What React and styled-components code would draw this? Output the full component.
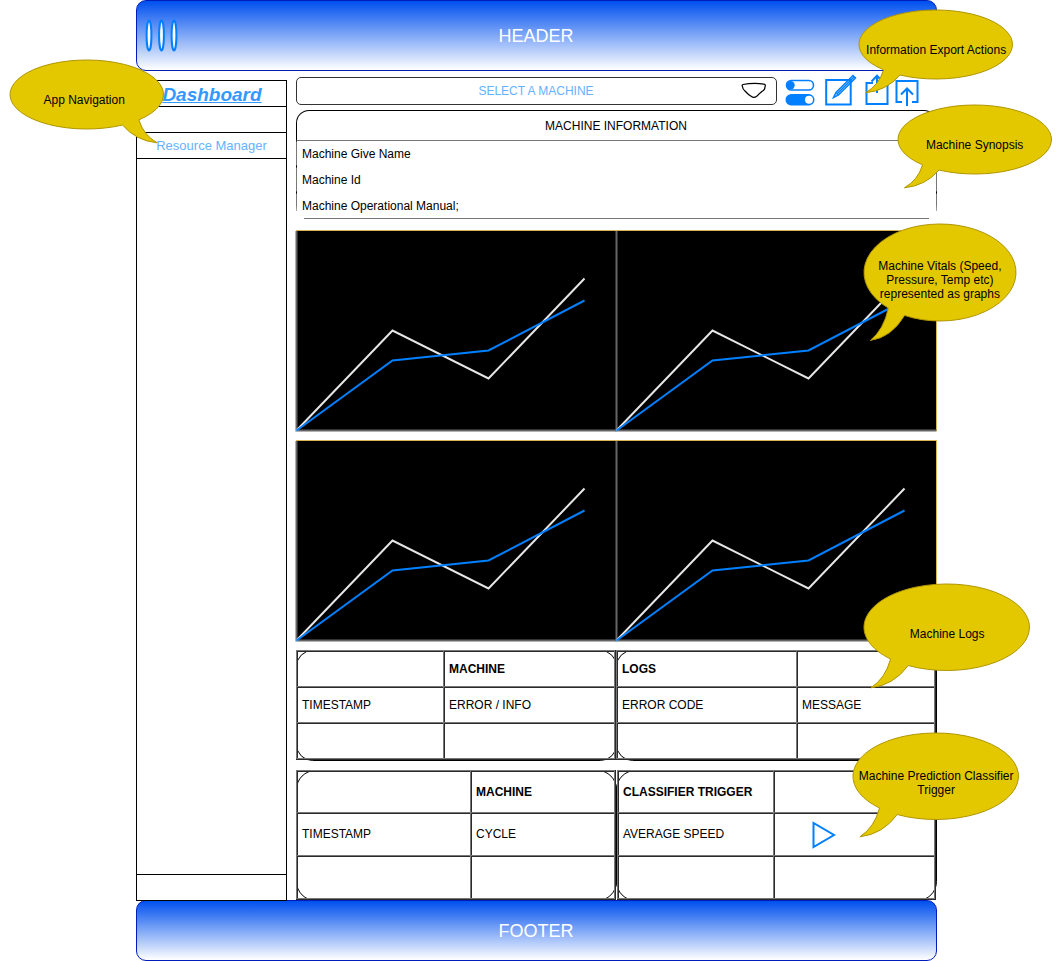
import React from "react";
import styled, { createGlobalStyle } from "styled-components";

const GlobalStyle = createGlobalStyle`
  *, *::before, *::after { box-sizing: border-box; }
  body { margin: 0; background: #fff; }
`;

const Page = styled.div`
  position: relative;
  width: 1061px;
  height: 961px;
  padding-left: 136px;
  overflow: hidden;
  background: #fff;
  color: #000;
  font: 12px/14px "Liberation Sans", Arial, sans-serif;
`;

const Shell = styled.div`
  display: flex;
  flex-direction: column;
  width: 801px;
`;

const Banner = styled.div`
  display: flex;
  align-items: center;
  justify-content: center;
  position: relative;
  height: ${(p) => p.$height}px;
  padding-right: 1px;
  border: 1px solid #001dbc;
  border-radius: 10px;
  background: linear-gradient(#0050ef, #fff);
  color: #fff;
  font-size: 18px;
  line-height: 20px;
`;

const FooterBanner = styled(Banner)`
  margin-top: -1px;
`;

const MenuIcon = styled.svg`
  position: absolute;
  left: 8px;
  top: 18px;
`;

const Body = styled.div`
  display: flex;
  align-items: flex-start;
  gap: 9px;
  height: 830px;
`;

const Sidebar = styled.nav`
  display: flex;
  flex-direction: column;
  position: relative;
  z-index: 1;
  width: 151px;
  height: 821px;
  margin-top: 9px;
  border: 1px solid #000;
`;

const NavItem = styled.div`
  display: flex;
  align-items: center;
  justify-content: center;
  height: 26px;
  border-bottom: 1px solid #000;
  font-size: 13px;
  color: #66b2ff;
`;

const ActiveItem = styled(NavItem)`
  padding: 2px 0 0 1px;
  font-size: 19px;
  font-weight: bold;
  font-style: italic;
  text-decoration: underline;
  color: #3399ff;
`;

const NavFoot = styled.div`
  height: 26px;
  margin-top: auto;
  border-top: 1px solid #000;
`;

const Main = styled.main`
  display: flex;
  flex-direction: column;
  width: 641px;
  padding-top: 6px;
`;

const Toolbar = styled.div`
  display: flex;
  height: 28px;
`;

const Select = styled.div`
  display: flex;
  align-items: center;
  justify-content: center;
  position: relative;
  width: 481px;
  padding-right: 1px;
  border: 1px solid #333;
  border-radius: 5px;
  color: #66b2ff;
`;

const Chevron = styled.svg`
  position: absolute;
  right: 8px;
  top: 3px;
`;

const Actions = styled.svg`
  flex: none;
  margin-top: -4px;
  margin-left: 3px;
`;

const InfoPanel = styled.section`
  height: 109px;
  margin-top: 5px;
`;

const InfoTitle = styled.div`
  display: flex;
  align-items: center;
  justify-content: center;
  height: 31px;
  padding-right: 1px;
  border: 1px solid #000;
  border-bottom-color: #777;
  border-radius: 13px 13px 0 0;
`;

const InfoRows = styled.div`
  position: relative;
  height: 78px;
  border-bottom: 1px solid #777;

  &::before, &::after {
    content: "";
    position: absolute;
    bottom: -1px;
    width: 8px;
    height: 8px;
    background: #fff;
  }
  &::before { left: 0; }
  &::after { right: 0; }
`;

const InfoRow = styled.div`
  display: flex;
  align-items: center;
  height: 26px;
  padding-left: 5px;
  border: solid #777;
  border-width: 0 1px;
  border-image: linear-gradient(#000 0 1px, #777 2px 23px, #000 24px) 1;

  &:last-child {
    border-image: linear-gradient(#000 0 1px, #777 2px 12px, #bbb 19px) 1;
  }
`;

const ChartRow = styled.div`
  display: flex;
  width: 641px;
  height: 201px;
  margin-top: ${(p) => p.$gap}px;
  background: #000;
  border-top: 1px solid #d6b656;
  border-right: 1px solid #d6b656;
`;

const ChartSvg = styled.svg`
  display: block;
  flex: none;
  overflow: visible;
  margin-top: -1px;
`;

const TableRow = styled.div`
  display: flex;
  width: 641px;
  height: ${(p) => p.$height}px;
  margin-top: 9px;
`;

const Slot = styled.div`
  position: relative;
  flex: none;
  width: ${(p) => p.$width}px;
  padding-left: ${(p) => p.$inset || 0}px;

  &::before {
    content: "";
    position: absolute;
    left: 0;
    top: 0;
    width: 321px;
    height: 100%;
    border: 1px solid #000;
    border-radius: ${(p) => p.$radius}px;
  }
`;

const Table = styled.div`
  display: grid;
  position: relative;
  grid-template-columns: ${(p) => p.$cols};
  grid-template-rows: ${(p) => p.$rows};
  width: max-content;
  padding: 0 1px 1px 0;
  border-right: 1px solid #2a2a2a;
  border-bottom: 1px solid #2a2a2a;
  box-shadow: inset -1px -1px #777;
`;

const Cell = styled.div`
  display: flex;
  align-items: center;
  padding-left: 5px;
  border-top: 1px solid #777;
  border-left: 1px solid #777;
  box-shadow: inset 1px 1px #2a2a2a;
  font-weight: ${(p) => (p.$bold ? "bold" : "normal")};
`;

const PlayIcon = styled.svg`
  margin: 2px 0 0 32px;
`;

const Bubble = styled.div`
  position: absolute;
  z-index: 2;
  left: ${(p) => p.$x}px;
  top: ${(p) => p.$y}px;
  width: ${(p) => p.$w}px;
  height: ${(p) => p.$h * 1.2}px;
`;

const BubbleShape = styled.svg`
  position: absolute;
  left: 0;
  top: 0;
  overflow: visible;
`;

const BubbleText = styled.div`
  display: flex;
  align-items: center;
  justify-content: center;
  position: relative;
  left: ${(p) => p.$dx}px;
  top: ${(p) => p.$dy}px;
  height: 100%;
  text-align: center;
  white-space: pre;
`;

function Callout({ x, y, w, h, flip, dx = 0.4, dy = -1, children }) {
  const d = `M ${0.1604 * w} ${0.867 * h}
    A ${w / 2} ${h / 2} 0 1 1 ${0.267 * w} ${0.9424 * h}
    Q ${0.18 * w} ${1.17 * h} ${0.042 * w} ${1.2 * h}
    Q ${0.13 * w} ${1.09 * h} ${0.1604 * w} ${0.867 * h} Z`;
  return (
    <Bubble $x={x} $y={y} $w={w} $h={h}>
      <BubbleShape width={w} height={h * 1.2}>
        <path d={d} fill="#e3c800" stroke="#b09500" transform={flip ? `translate(${w} 0) scale(-1 1)` : undefined} />
      </BubbleShape>
      <BubbleText $dx={dx} $dy={dy}>{children}</BubbleText>
    </Bubble>
  );
}

function Chart() {
  return (
    <ChartSvg width="320" height="201" fill="none" strokeWidth="2">
      <path d="M.5 1V200.5H320.5" stroke="#666" />
      <path d="M.5 200.5L96.5 100.5L192.5 148.5L288.5 48.5" stroke="#e6e6e6" />
      <path d="M.5 200.5L96.5 130.5L192.5 120.5L288.5 70.5" stroke="#007fff" />
    </ChartSvg>
  );
}

function DataTable({ cols, rows, cells }) {
  return (
    <Table $cols={cols} $rows={rows}>
      {cells.map((c, i) => (
        <Cell key={i} $bold={i < 2}>{c}</Cell>
      ))}
    </Table>
  );
}

const play = (
  <PlayIcon width="26" height="30">
    <path d="M2.5 3V27L23 15Z" fill="none" stroke="#007fff" strokeWidth="2" />
  </PlayIcon>
);

export default function App() {
  return (
    <Page>
      <GlobalStyle />
      <Shell>
        <Banner as="header" $height={71}>
          <MenuIcon width="34" height="34" fill="#fff" stroke="#007fff" strokeWidth="2">
            <ellipse cx="4" cy="16.5" rx="2.4" ry="15" />
            <ellipse cx="16.5" cy="16.5" rx="2.4" ry="15" />
            <ellipse cx="29" cy="16.5" rx="2.4" ry="15" />
          </MenuIcon>
          HEADER
        </Banner>
        <Body>
          <Sidebar>
            <ActiveItem>Dashboard</ActiveItem>
            <NavItem />
            <NavItem>Resource Manager</NavItem>
            <NavFoot />
          </Sidebar>
          <Main>
            <Toolbar>
              <Select>
                SELECT A MACHINE
                <Chevron width="28" height="20" fill="none" stroke="#000" strokeWidth="1.2">
                  <path d="M3 3.5Q14 1.5 24 3.2Q26 3.5 25 6Q25 9 22.5 10Q20 12 17 15Q14 17.5 11.5 15.5Q8 13.5 5 10Q2.5 8 2.5 5.5Q1.5 4 3 3.5Z" />
                </Chevron>
              </Select>
              <Actions width="146" height="36" viewBox="780 73 146 36" fill="none" stroke="#007fff" strokeWidth="2">
                <rect x="786.5" y="80.5" width="27" height="9.5" rx="4.75" strokeWidth="1.6" />
                <circle cx="790.5" cy="85.2" r="4.2" fill="#007fff" stroke="none" />
                <rect x="785.5" y="94" width="29" height="11.5" rx="5.75" fill="#007fff" stroke="none" />
                <circle cx="809" cy="99.8" r="4" fill="#fff" stroke="none" />
                <rect x="826.2" y="80" width="24.5" height="24.5" />
                <path d="M833.5 97.5L836 92.5L853 75.5L855.5 78L838.5 95ZM836.5 94.5L854 77" strokeWidth="1.5" />
                <path d="M873 83H866.5V104H887.5V83H881M877 93V76M871.5 81.5L877 75.8L882.5 81.5" />
                <path d="M902 102H896.5V81H917.5V102H912M907 106V89M901 94.5L907 88.5L913 94.5" />
              </Actions>
            </Toolbar>
            <InfoPanel>
              <InfoTitle>MACHINE INFORMATION</InfoTitle>
              <InfoRows>
                <InfoRow>Machine Give Name</InfoRow>
                <InfoRow>Machine Id</InfoRow>
                <InfoRow>Machine Operational Manual;</InfoRow>
              </InfoRows>
            </InfoPanel>
            <ChartRow $gap={11}><Chart /><Chart /></ChartRow>
            <ChartRow $gap={9}><Chart /><Chart /></ChartRow>
            <TableRow $height={111}>
              <Slot $width={320} $radius={16.5}>
                <DataTable cols="147px 171px" rows="36px 36px 36px"
                  cells={["", "MACHINE", "TIMESTAMP", "ERROR / INFO", "", ""]} />
              </Slot>
              <Slot $width={321} $radius={16.5}>
                <DataTable cols="180px 138px" rows="36px 36px 36px"
                  cells={["LOGS", "", "ERROR CODE", "MESSAGE", "", ""]} />
              </Slot>
            </TableRow>
            <TableRow $height={131}>
              <Slot $width={320} $radius={19.5}>
                <DataTable cols="174px 144px" rows="42px 43px 43px"
                  cells={["", "MACHINE", "TIMESTAMP", "CYCLE", "", ""]} />
              </Slot>
              <Slot $width={321} $inset={1} $radius={19.5}>
                <DataTable cols="156px 161px" rows="42px 43px 43px"
                  cells={["CLASSIFIER TRIGGER", "", "AVERAGE SPEED", play, "", ""]} />
              </Slot>
            </TableRow>
          </Main>
        </Body>
        <FooterBanner as="footer" $height={61}>FOOTER</FooterBanner>
      </Shell>

      <Callout x={10} y={59.5} w={153.5} h={69} flip dx={-2.6}>App Navigation</Callout>
      <Callout x={859} y={9.5} w={153.5} h={69}>Information Export Actions</Callout>
      <Callout x={897.5} y={104.5} w={153.5} h={69}>Machine Synopsis</Callout>
      <Callout x={863.5} y={224} w={152} h={97} dy={-2}>{"Machine Vitals (Speed,\nPressure, Temp etc)\nrepresented as graphs"}</Callout>
      <Callout x={864} y={583.5} w={165.5} h={86.5}>Machine Logs</Callout>
      <Callout x={853} y={732.5} w={165.5} h={86.5}>{"Machine Prediction Classifier\nTrigger"}</Callout>
    </Page>
  );
}
